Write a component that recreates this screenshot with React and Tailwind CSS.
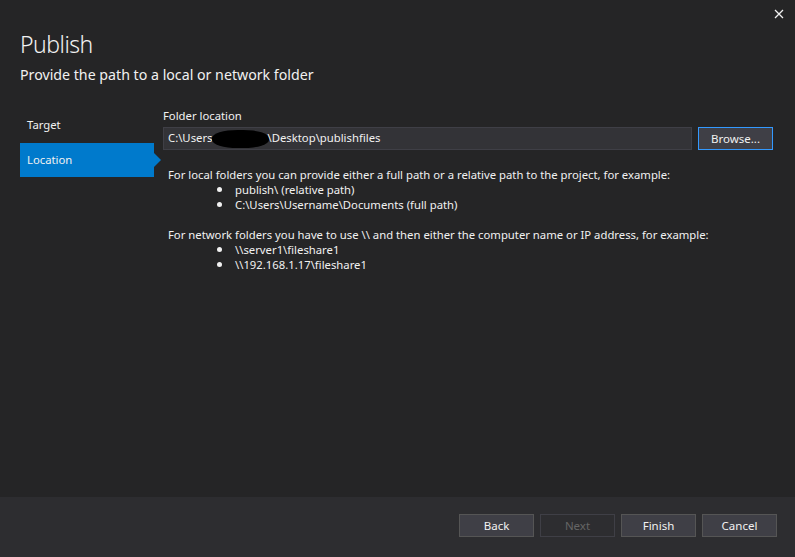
export default function App() {
  const Bullet = ({ children }) => (
    <li className="flex items-center pl-[49px]">
      <span className="w-[18px] flex items-center">
        <span className="block w-[5px] h-[5px] rounded-full bg-[#f1f1f1]" />
      </span>
      <span>{children}</span>
    </li>
  );
  const Btn = ({ children, disabled }) => (
    <button
      className={
        disabled
          ? "w-[75px] h-[23px] border border-[#3f3f46] bg-[#2d2d30] text-[#656565] text-[11.5px] leading-none"
          : "w-[75px] h-[23px] border border-[#555555] bg-[#3f3f46] text-[#f1f1f1] text-[11.5px] leading-none"
      }
    >
      {children}
    </button>
  );
  return (
    <div className="w-[795px] h-[557px] bg-[#252526] text-[#f1f1f1] flex flex-col relative overflow-hidden font-['Noto_Sans',sans-serif]">
      <svg className="absolute left-[774px] top-[9px]" width="10" height="10" viewBox="0 0 10 10">
        <path d="M1 1 L9 9 M9 1 L1 9" stroke="#f1f1f1" strokeWidth="1.3" fill="none" />
      </svg>
      <div className="pt-[28px] px-[20px]">
        <div className="text-[23px] font-light leading-[32px] tracking-[-0.5px]">Publish</div>
        <div className="text-[14.2px] leading-[20px] mt-[5px]">Provide the path to a local or network folder</div>
      </div>
      <div className="flex flex-1 pl-[20px] pr-[22px] pt-[23px]">
        <div className="w-[134px] flex flex-col pt-[2px]">
          <div className="h-[33px] pl-[7px] flex items-center text-[11.3px] pb-[2px]">Target</div>
          <div className="h-[34px] pl-[7px] flex items-center text-[11.3px] bg-[#007acc] relative">
            Location
            <span className="absolute right-[-7px] top-[10px] w-0 h-0 border-y-[7px] border-y-transparent border-l-[7px] border-l-[#007acc]" />
          </div>
        </div>
        <div className="ml-[9px] flex-1 flex flex-col text-[11.3px]">
          <div className="leading-[16px]">Folder location</div>
          <div className="flex gap-[6px] mt-[3px]">
            <div className="flex-1 h-[23px] border border-[#3f3f46] bg-[#333337] px-[4px] flex items-center whitespace-nowrap">
              <span>C:\Users</span>
              <span className="inline-block w-[57px] h-[18px] bg-black rounded-[45%] mx-[-1px]" />
              <span>\Desktop\publishfiles</span>
            </div>
            <button className="w-[75px] h-[23px] border border-[#3399ff] bg-[#3f3f46] text-[11.5px] leading-none text-[#f1f1f1]">Browse...</button>
          </div>
          <div className="pl-[5px] leading-[15px] mt-[17px]">
            <div>For local folders you can provide either a full path or a relative path to the project, for example:</div>
            <ul>
              <Bullet>publish\ (relative path)</Bullet>
              <Bullet>C:\Users\Username\Documents (full path)</Bullet>
            </ul>
            <div className="mt-[15px]">For network folders you have to use \\ and then either the computer name or IP address, for example:</div>
            <ul>
              <Bullet>\\server1\fileshare1</Bullet>
              <Bullet>\\192.168.1.17\fileshare1</Bullet>
            </ul>
          </div>
        </div>
      </div>
      <div className="h-[60px] bg-[#2d2d30] flex justify-end items-start pt-[17px] pr-[18px] gap-[6px]">
        <Btn>Back</Btn>
        <Btn disabled>Next</Btn>
        <Btn>Finish</Btn>
        <Btn>Cancel</Btn>
      </div>
    </div>
  );
}
